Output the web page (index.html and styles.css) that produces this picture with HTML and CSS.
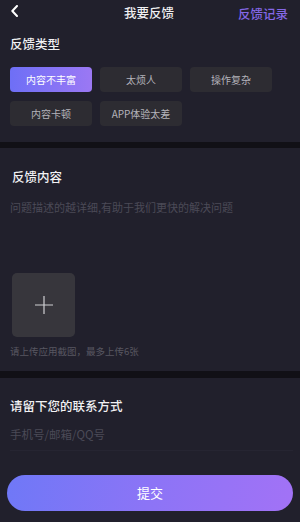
FILE: index.html
```html
<!DOCTYPE html>
<html lang="zh-CN">
<head>
<meta charset="utf-8">
<title>我要反馈</title>
<link rel="stylesheet" href="styles.css">
</head>
<body>
<div class="page">
  <header class="topbar">
    <div class="side side-left">
      <svg class="back" width="8" height="12" viewBox="0 0 8 12"><polyline points="7,1 2.3,6 7,11" fill="none" stroke="#ffffff" stroke-width="2" stroke-linecap="round" stroke-linejoin="round"/></svg>
    </div>
    <div class="title">我要反馈</div>
    <div class="side side-right">反馈记录</div>
  </header>

  <section class="block block-type">
    <div class="heading">反馈类型</div>
    <div class="chips">
      <div class="chip chip-active">内容不丰富</div>
      <div class="chip">太烦人</div>
      <div class="chip">操作复杂</div>
      <div class="chip">内容卡顿</div>
      <div class="chip">APP体验太差</div>
    </div>
  </section>

  <section class="block block-content">
    <div class="heading heading-indent">反馈内容</div>
    <div class="placeholder">问题描述的越详细,有助于我们更快的解决问题</div>
    <div class="upload">
      <svg width="20" height="20" viewBox="0 0 20 20"><path d="M10 1v18M1 10h18" stroke="#cfcfd2" stroke-width="1.2" fill="none"/></svg>
    </div>
    <div class="caption">请上传应用截图，最多上传6张</div>
  </section>

  <section class="block block-contact">
    <div class="heading">请留下您的联系方式</div>
    <div class="placeholder placeholder-contact">手机号/邮箱/QQ号</div>
    <div class="submit">提交</div>
  </section>
</div>
</body>
</html>
```
FILE: styles.css
```css
* { box-sizing: border-box; }
html, body { margin: 0; padding: 0; }
body {
  background: #21202c;
  font-family: "Noto Sans CJK SC", "Noto Sans", sans-serif;
  color: #f2f2f4;
}
.page {
  width: 300px;
  height: 522px;
  overflow: hidden;
  display: flex;
  flex-direction: column;
}
.topbar {
  height: 25px;
  display: flex;
  align-items: center;
  padding: 0 12px 0 10px;
}
.side { width: 60px; }
.side-left { display: flex; align-items: center; }
.back { margin-bottom: 3px; }
.title {
  flex: 1;
  text-align: center;
  font-size: 12.5px;
  font-weight: 500;
  line-height: 17px;
  color: #f0f0f2;
}
.side-right {
  text-align: right;
  font-size: 12.5px;
  line-height: 17px;
  color: #8467e6;
  font-weight: 500;
  margin-top: 1px;
}
.block {
  display: flex;
  flex-direction: column;
  align-items: flex-start;
  padding: 0 10px;
}
.heading {
  font-size: 12.5px;
  line-height: 17px;
  font-weight: 500;
  color: #f1f1f3;
}
.heading-indent { padding-left: 2px; }
.block-type { padding-top: 10px; padding-bottom: 16px; }
.chips {
  margin-top: 15px;
  display: grid;
  grid-template-columns: repeat(3, 82px);
  column-gap: 8px;
  row-gap: 9px;
}
.chip {
  height: 25px;
  border-radius: 4px;
  background: #2d2c32;
  color: #b4b3ba;
  font-size: 10px;
  line-height: 25px;
  text-align: center;
}
.chip-active {
  background: linear-gradient(90deg, #6e6ff6 0%, #9b78f4 100%);
  color: #ffffff;
}
.block-content {
  border-top: 6px solid #111016;
  padding-top: 20px;
  padding-bottom: 13px;
}
.placeholder {
  margin-top: 15px;
  font-size: 11px;
  line-height: 15px;
  color: #4b4a57;
}
.upload {
  margin-top: 58px;
  margin-left: 2px;
  width: 63px;
  height: 64px;
  border-radius: 5px;
  background: #37363c;
  display: flex;
  align-items: center;
  justify-content: center;
}
.caption {
  margin-top: 8px;
  font-size: 9.5px;
  line-height: 13px;
  color: #585761;
}
.block-contact {
  border-top: 7px solid #111016;
  padding: 19px 7px 0;
}
.block-contact .heading,
.block-contact .placeholder { margin-left: 3px; }
.placeholder-contact {
  margin-top: 12px;
  font-size: 11.5px;
  line-height: 16px;
  width: 283px;
  padding-bottom: 8px;
  border-bottom: 1px solid #262532;
}
.submit {
  margin-top: 24px;
  width: 286px;
  height: 36px;
  border-radius: 18px;
  background: linear-gradient(100deg, #6f78f7 0%, #8c74f6 50%, #a272f6 100%);
  color: #ffffff;
  font-size: 13px;
  line-height: 36px;
  text-align: center;
}
```
